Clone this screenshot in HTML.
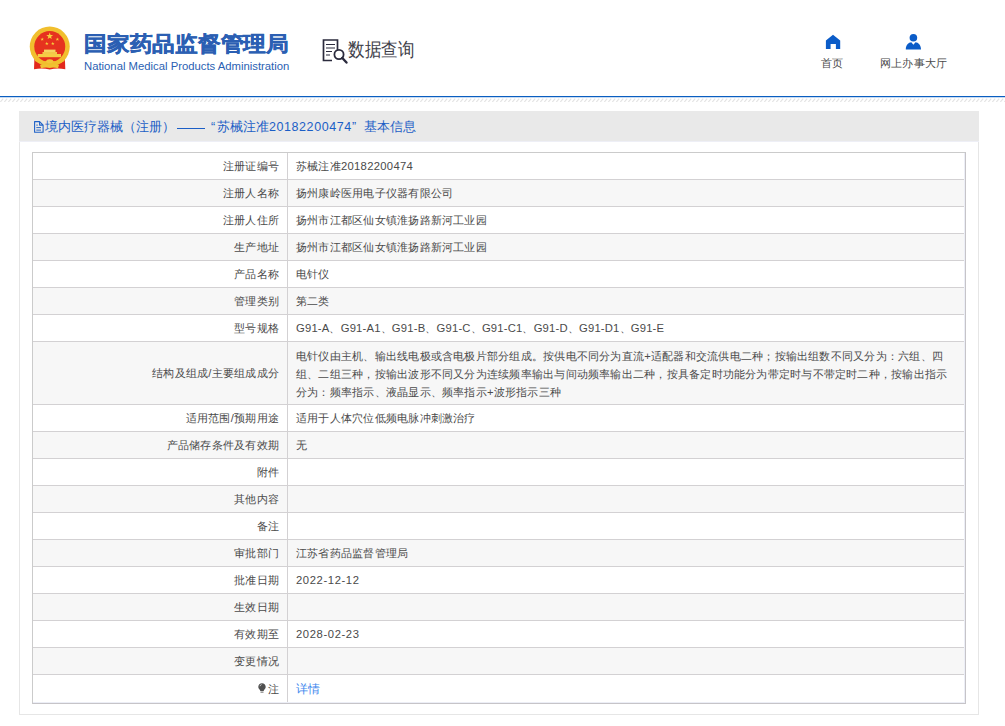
<!DOCTYPE html>
<html><head><meta charset="utf-8">
<style>
*{margin:0;padding:0;box-sizing:border-box}
html,body{width:1005px;height:726px;overflow:hidden;background:#fff;font-family:"Liberation Sans",sans-serif;color:#4a4a4a}
.abs{position:absolute}
.t1{position:absolute;left:84px;top:32px;font-size:22.3px;line-height:26px;font-weight:bold;color:#2b5fb3;white-space:nowrap;letter-spacing:.75px;-webkit-text-stroke:.5px #2b5fb3;transform:scaleY(.93);transform-origin:0 0}
.t2{position:absolute;left:84px;top:58px;font-size:11.3px;line-height:16px;color:#2b5fb3;white-space:nowrap}
.sqt{position:absolute;left:348px;top:38px;font-size:18.7px;line-height:24px;color:#3d3d48;white-space:nowrap;transform:scaleX(.87);transform-origin:0 0}
.navt{position:absolute;top:55px;font-size:11.25px;line-height:16px;color:#4a4a4a;white-space:nowrap;letter-spacing:.23px}
.bl{position:absolute;left:0;top:96px;width:1005px;height:1px;background:#0a5ec0}
.bl2{position:absolute;left:0;top:97px;width:1005px;height:1px;background:#c6daf2}
.panel{position:absolute;left:19px;top:111px;width:960px;height:604px;border:1px solid #e6e6e6;border-top:none;background:#fff}
.ph{position:absolute;left:-1px;top:0;width:960px;height:31px;background:#e9e9e9;border-bottom:1px solid #eeeff6}
.pht{position:absolute;left:26px;top:8px;font-size:12.5px;line-height:16px;color:#1b5ec6;white-space:nowrap}
.tbl{position:absolute;left:32px;top:152px;width:934px;height:552px;border:1px solid #cbcbcb;border-right-color:#c6c4c8;border-bottom-color:#c6c4c8;background:#fff;font-size:11.25px;letter-spacing:.23px;overflow:hidden}
.row{position:absolute;left:0;width:932px;border-top:1px solid #d3d1d3}
.lc{position:absolute;left:0;top:0;width:254px;padding-right:8px;text-align:right;white-space:nowrap;bottom:0}
.vc{position:absolute;left:254px;top:0;right:0;padding-left:8px;white-space:nowrap;border-left:1px solid #d3d1d3;bottom:0}
.vc.tall{line-height:18px;padding-top:5px}
.n{letter-spacing:.3px}
.d{letter-spacing:.6px}
.g{letter-spacing:.19px}
a{color:#3b86ee;text-decoration:none;font-size:12.3px;letter-spacing:0}
.bulb{vertical-align:0px;margin-right:2px}
</style></head><body>
<svg class="abs" style="left:25px;top:22px" width="50" height="52" viewBox="25 22 50 52">
  <path d="M34.5 56 L34 69.3 Q42 67.5 49.7 69.5 Q57.5 67.5 65.3 69.3 L64.8 56 Z" fill="#e2281c"/>
  <circle cx="49.75" cy="46.6" r="20" fill="#f1bf2e"/>
  <circle cx="49.75" cy="46.6" r="15.5" fill="#e6321f"/>
  <polygon points="49.70,32.60 50.55,35.04 53.12,35.09 51.07,36.64 51.82,39.11 49.70,37.64 47.58,39.11 48.33,36.64 46.28,35.09 48.85,35.04" fill="#f5cf3a"/>
  <polygon points="42.20,37.40 42.65,38.69 44.01,38.71 42.92,39.53 43.32,40.84 42.20,40.06 41.08,40.84 41.48,39.53 40.39,38.71 41.75,38.69" fill="#f5cf3a"/>
  <polygon points="57.40,37.40 57.85,38.69 59.21,38.71 58.12,39.53 58.52,40.84 57.40,40.06 56.28,40.84 56.68,39.53 55.59,38.71 56.95,38.69" fill="#f5cf3a"/>
  <polygon points="46.80,41.70 47.25,42.99 48.61,43.01 47.52,43.83 47.92,45.14 46.80,44.36 45.68,45.14 46.08,43.83 44.99,43.01 46.35,42.99" fill="#f5cf3a"/>
  <polygon points="52.80,41.70 53.25,42.99 54.61,43.01 53.52,43.83 53.92,45.14 52.80,44.36 51.68,45.14 52.08,43.83 50.99,43.01 52.35,42.99" fill="#f5cf3a"/>
  <rect x="44" y="49.6" width="11.5" height="2.6" fill="#f6d561"/>
  <rect x="42.5" y="52" width="14.5" height="2.2" fill="#f3c94a"/>
  <rect x="37.8" y="54" width="23.2" height="3.2" fill="#f5cf45"/>
  <path d="M35 58.5 Q42 63.5 49.7 60 Q57.5 63.5 64.5 58.5 L64.5 61 Q57.5 66 49.7 62.8 Q42 66 35 61 Z" fill="#f1bf2e"/>
  <path d="M40 65 Q44.5 63.5 49.7 65.5 Q55 63.5 59 65 L58 68.3 Q53.5 66.8 49.7 68 Q46 66.8 41 68.3 Z" fill="#f1c232"/>
  <ellipse cx="49.7" cy="61.2" rx="3.5" ry="2" fill="#f3c53a"/>
</svg>
<div class="t1">国家药品监督管理局</div>
<div class="t2">National Medical Products Administration</div>
<svg class="abs" style="left:322px;top:38px" width="28" height="28" viewBox="0 0 28 28">
  <path d="M15.5 18 V2 H1.5 V22.5 H10" fill="none" stroke="#2b2b3d" stroke-width="1.7"/>
  <path d="M4 6.5 H13 M4 10 H13 M4 13.5 H10 M4 17 H8" stroke="#2b2b3d" stroke-width="1.2"/>
  <circle cx="17" cy="16.5" r="4.6" fill="#fff" stroke="#2b2b3d" stroke-width="1.8"/>
  <path d="M20.3 20 L24.5 24.5" stroke="#2b2b3d" stroke-width="2.4" stroke-linecap="round"/>
</svg>
<div class="sqt">数据查询</div>
<svg class="abs" style="left:825px;top:34px" width="16" height="15" viewBox="0 0 16 15">
  <path d="M8 0.8 L15.2 6.5 V14.9 H10.9 V9.9 H5.6 V14.9 H0.9 V6.5 Z" fill="#0b5cc8"/>
</svg>
<div class="navt" style="left:821px">首页</div>
<svg class="abs" style="left:905px;top:33px" width="17" height="17" viewBox="0 0 17 17">
  <circle cx="8.4" cy="4.7" r="3.8" fill="#0b5cc8"/>
  <path d="M0.8 16.5 C0.8 12 3.5 9.5 6.3 9.3 L8.4 11.8 L10.5 9.3 C13.3 9.5 16 12 16 16.5 Z" fill="#0b5cc8"/>
</svg>
<div class="navt" style="left:880px">网上办事大厅</div>
<div class="bl"></div><div class="bl2"></div>
<svg class="abs" style="left:0;top:98px" width="1005" height="4"><defs><pattern id="sp" width="4" height="4" patternUnits="userSpaceOnUse"><path d="M0.3 4 L3.2 0.6" stroke="#e3e3e3" stroke-width="1.2"/></pattern></defs><rect width="1005" height="4" fill="url(#sp)"/></svg>
<div class="panel">
  <div class="ph">
    <svg class="abs" style="left:15px;top:10px" width="11" height="13" viewBox="0 0 11 13"><path d="M0.6 0.6 H5.6 L9.1 4.1 V11.2 H0.6 Z M5.6 0.6 V4.1 H9.1" fill="none" stroke="#1f62c8" stroke-width="1.1" stroke-linejoin="round"/><path d="M2.3 4.1 H3.8 M2.3 6.6 H7 M2.3 9.1 H7" stroke="#2d68c4" stroke-width="1"/></svg>
    <div class="pht" style="left:26px">境内医疗器械（注册）</div>
    <div class="abs" style="left:158px;top:17px;width:27.5px;height:1.2px;background:#1b5ec6"></div>
    <div class="pht" style="left:192px">“</div>
    <div class="pht" style="left:198px">苏械注准<span style="letter-spacing:.57px">20182200474</span></div>
    <div class="pht" style="left:333px">”</div>
    <div class="pht" style="left:345px">基本信息</div>
  </div>
</div>
<div class="tbl">
<div class="row" style="top:0px;height:26px;background:#fff;border-top:none;"><div class="lc" style="line-height:26px">注册证编号</div><div class="vc" style="line-height:26px">苏械注准<span class=n>20182200474</span></div></div>
<div class="row" style="top:26px;height:27px;background:#f7f7f7;"><div class="lc" style="line-height:26px">注册人名称</div><div class="vc" style="line-height:26px">扬州康岭医用电子仪器有限公司</div></div>
<div class="row" style="top:53px;height:27px;background:#fff;"><div class="lc" style="line-height:26px">注册人住所</div><div class="vc" style="line-height:26px">扬州市江都区仙女镇淮扬路新河工业园</div></div>
<div class="row" style="top:80px;height:27px;background:#f7f7f7;"><div class="lc" style="line-height:26px">生产地址</div><div class="vc" style="line-height:26px">扬州市江都区仙女镇淮扬路新河工业园</div></div>
<div class="row" style="top:107px;height:27px;background:#fff;"><div class="lc" style="line-height:26px">产品名称</div><div class="vc" style="line-height:26px">电针仪</div></div>
<div class="row" style="top:134px;height:27px;background:#f7f7f7;"><div class="lc" style="line-height:26px">管理类别</div><div class="vc" style="line-height:26px">第二类</div></div>
<div class="row" style="top:161px;height:27px;background:#fff;"><div class="lc" style="line-height:26px">型号规格</div><div class="vc" style="line-height:26px"><span class=g>G91-A</span>、<span class=g>G91-A1</span>、<span class=g>G91-B</span>、<span class=g>G91-C</span>、<span class=g>G91-C1</span>、<span class=g>G91-D</span>、<span class=g>G91-D1</span>、<span class=g>G91-E</span></div></div>
<div class="row" style="top:188px;height:63px;background:#f7f7f7;"><div class="lc" style="line-height:62px">结构及组成/主要组成成分</div><div class="vc tall" style="">电针仪由主机、输出线电极或含电极片部分组成。按供电不同分为直流<span class=n>+</span>适配器和交流供电二种；按输出组数不同又分为：六组、四<br>组、二组三种，按输出波形不同又分为连续频率输出与间动频率输出二种，按具备定时功能分为带定时与不带定时二种，按输出指示<br>分为：频率指示、液晶显示、频率指示<span class=n>+</span>波形指示三种</div></div>
<div class="row" style="top:251px;height:27px;background:#fff;"><div class="lc" style="line-height:26px">适用范围/预期用途</div><div class="vc" style="line-height:26px">适用于人体穴位低频电脉冲刺激治疗</div></div>
<div class="row" style="top:278px;height:27px;background:#f7f7f7;"><div class="lc" style="line-height:26px">产品储存条件及有效期</div><div class="vc" style="line-height:26px">无</div></div>
<div class="row" style="top:305px;height:27px;background:#fff;"><div class="lc" style="line-height:26px">附件</div><div class="vc" style="line-height:26px"></div></div>
<div class="row" style="top:332px;height:27px;background:#f7f7f7;"><div class="lc" style="line-height:26px">其他内容</div><div class="vc" style="line-height:26px"></div></div>
<div class="row" style="top:359px;height:27px;background:#fff;"><div class="lc" style="line-height:26px">备注</div><div class="vc" style="line-height:26px"></div></div>
<div class="row" style="top:386px;height:27px;background:#f7f7f7;"><div class="lc" style="line-height:26px">审批部门</div><div class="vc" style="line-height:26px">江苏省药品监督管理局</div></div>
<div class="row" style="top:413px;height:27px;background:#fff;"><div class="lc" style="line-height:26px">批准日期</div><div class="vc" style="line-height:26px"><span class=d>2022-12-12</span></div></div>
<div class="row" style="top:440px;height:27px;background:#f7f7f7;"><div class="lc" style="line-height:26px">生效日期</div><div class="vc" style="line-height:26px"></div></div>
<div class="row" style="top:467px;height:27px;background:#fff;"><div class="lc" style="line-height:26px">有效期至</div><div class="vc" style="line-height:26px"><span class=d>2028-02-23</span></div></div>
<div class="row" style="top:494px;height:27px;background:#f7f7f7;"><div class="lc" style="line-height:26px">变更情况</div><div class="vc" style="line-height:26px"></div></div>
<div class="row" style="top:521px;height:29px;background:#fff;"><div class="lc" style="line-height:28px"><svg class=bulb width=8 height=10 viewBox='0 0 8 10'><path d='M4 0.2C1.9 0.2 0.3 1.8 0.3 3.8c0 1.3.7 2.2 1.4 2.9.4.4.6.9.6 1.4h3.4c0-.5.2-1 .6-1.4.7-.7 1.4-1.6 1.4-2.9C7.7 1.8 6.1.2 4 .2z' fill='#505050'/><path d='M2 3.2 Q2.3 1.8 3.6 1.5' stroke='#ddd' stroke-width='.8' fill='none'/><rect x='2.5' y='8.5' width='3' height='1.3' fill='#888'/></svg>注</div><div class="vc" style="line-height:28px"><a>详情</a></div></div>
</div>
<div class="abs" style="left:964px;top:153px;width:1px;height:550px;background:#eceef6"></div>
<div class="abs" style="left:33px;top:702px;width:932px;height:1px;background:#eceef6"></div>
</body></html>
